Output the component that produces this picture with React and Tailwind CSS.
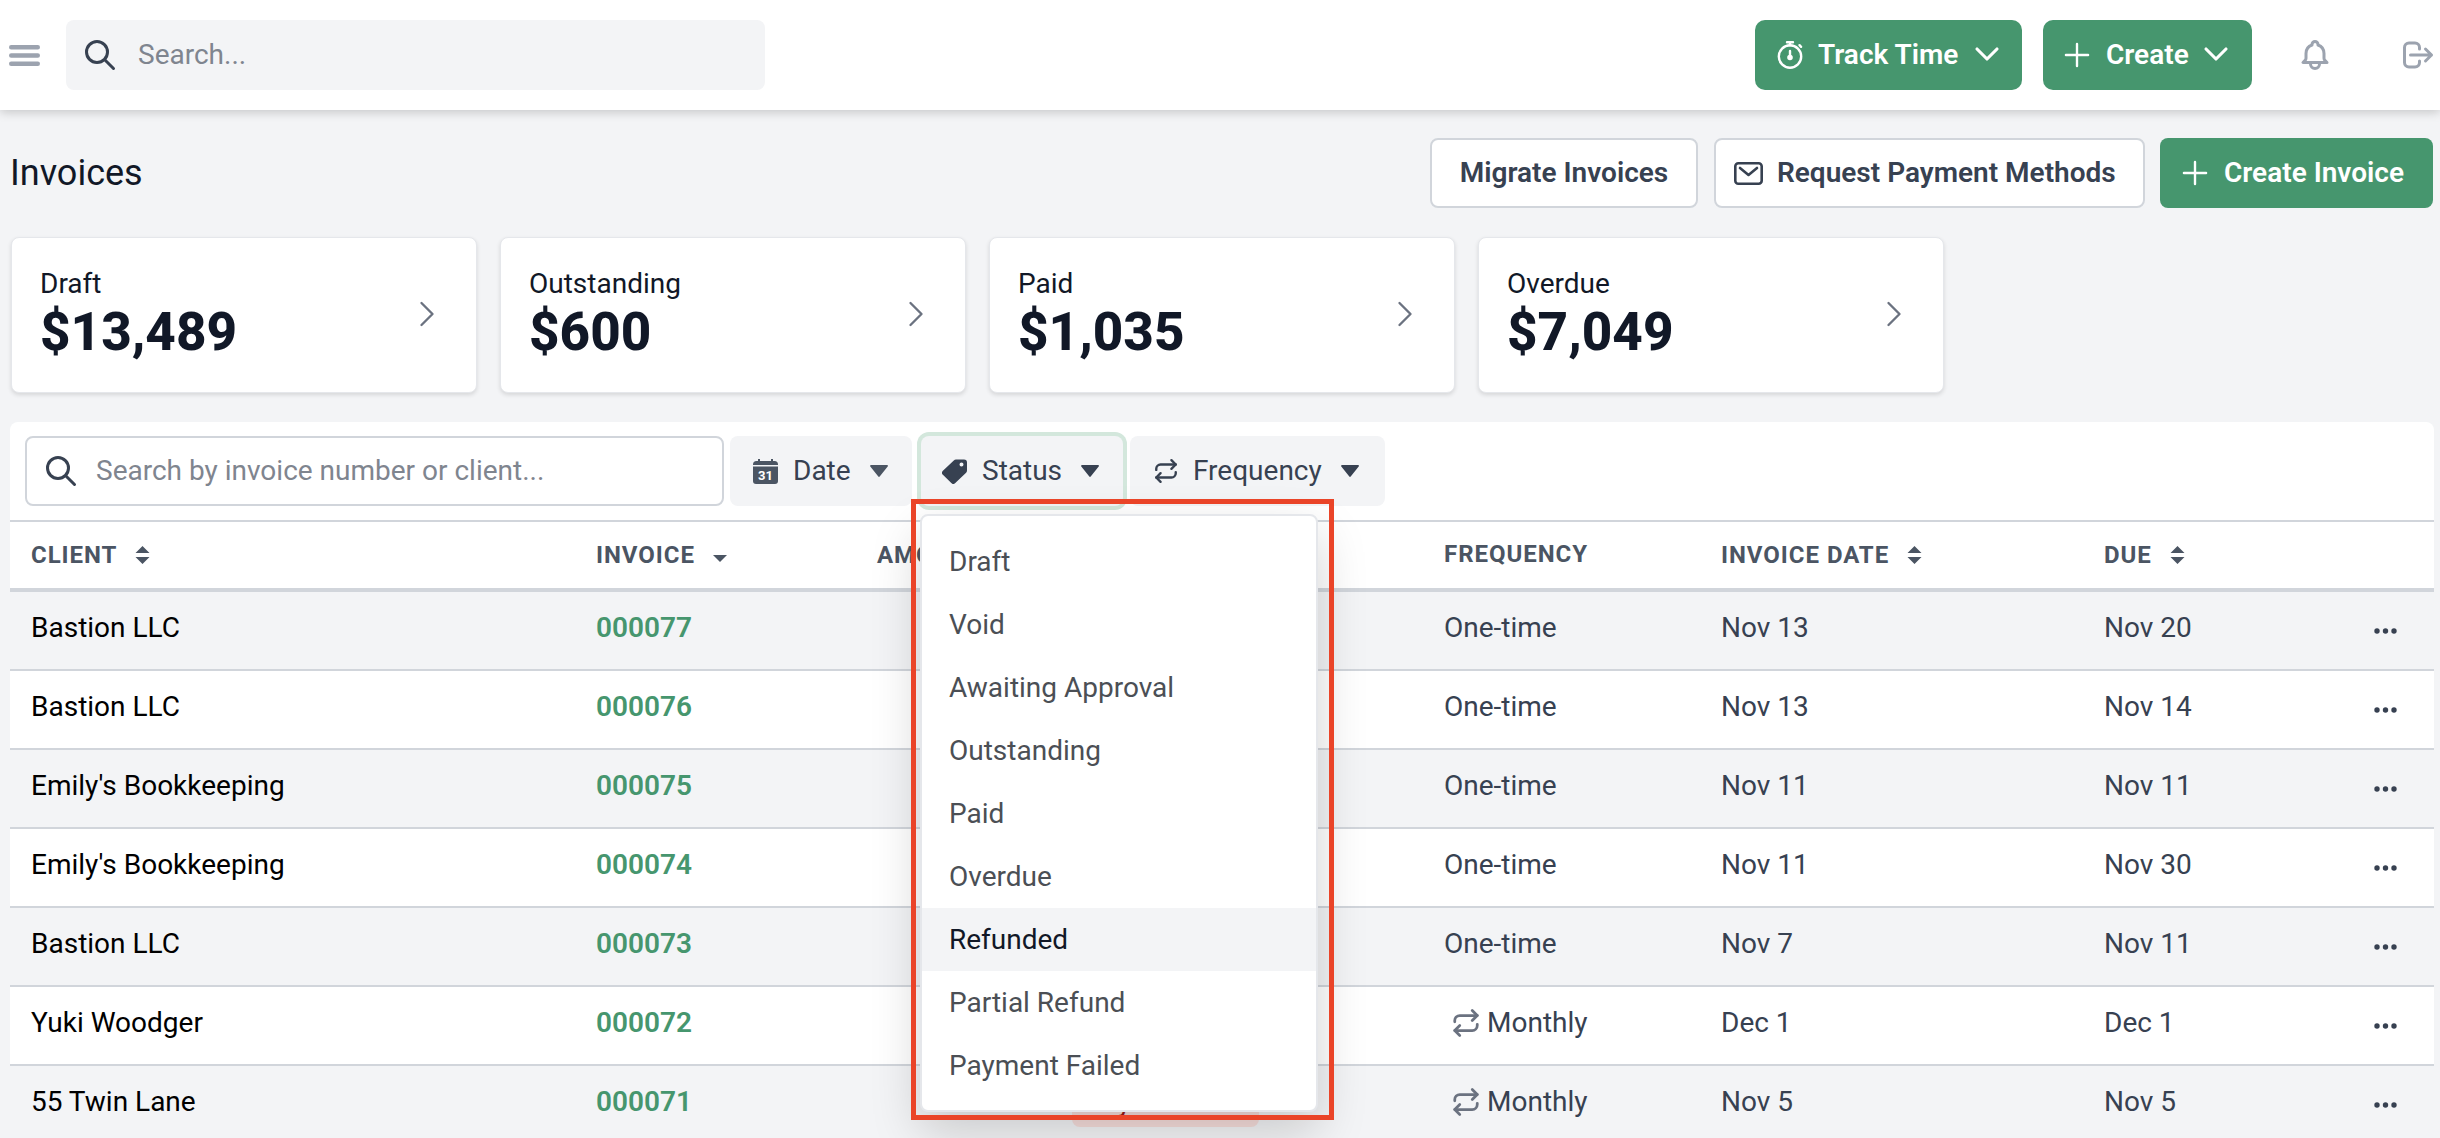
import { ChevronDown, ChevronRight, Plus, Repeat } from "lucide-react";

const invoices = [
  { client: "Bastion LLC", number: "000077", frequency: "One-time", date: "Nov 13", due: "Nov 20" },
  { client: "Bastion LLC", number: "000076", frequency: "One-time", date: "Nov 13", due: "Nov 14" },
  { client: "Emily's Bookkeeping", number: "000075", frequency: "One-time", date: "Nov 11", due: "Nov 11" },
  { client: "Emily's Bookkeeping", number: "000074", frequency: "One-time", date: "Nov 11", due: "Nov 30" },
  { client: "Bastion LLC", number: "000073", frequency: "One-time", date: "Nov 7", due: "Nov 11" },
  { client: "Yuki Woodger", number: "000072", frequency: "Monthly", date: "Dec 1", due: "Dec 1" },
  { client: "55 Twin Lane", number: "000071", frequency: "Monthly", date: "Nov 5", due: "Nov 5", status: "Payment Failed" },
];

const stats = [
  { label: "Draft", value: "$13,489" },
  { label: "Outstanding", value: "$600" },
  { label: "Paid", value: "$1,035" },
  { label: "Overdue", value: "$7,049" },
];

const statuses = ["Draft", "Void", "Awaiting Approval", "Outstanding", "Paid", "Overdue", "Refunded", "Partial Refund", "Payment Failed"];

const columns = "grid grid-cols-[565px_281px_195px_372px_277px_383px_1fr_60px] items-center pl-[21px]";

function SearchIcon({ className }) {
  return (
    <svg viewBox="0 0 24 24" fill="none" stroke="currentColor" strokeWidth="2" strokeLinecap="round" strokeLinejoin="round" className={className}>
      <path d="M21 21l-6-6m2-5a7 7 0 11-14 0 7 7 0 0114 0z" />
    </svg>
  );
}

function Caret({ className = "text-[#374151]" }) {
  return (
    <svg viewBox="0 0 18 12" fill="currentColor" className={`w-[18px] h-[12px] shrink-0 ${className}`}>
      <path d="M1 0h16c.8 0 1.2.9.7 1.5L9.7 11.5c-.4.5-1 .5-1.4 0L.3 1.5C-.2.9.2 0 1 0z" />
    </svg>
  );
}

function SortIcon() {
  return (
    <svg viewBox="0 0 14 18" fill="#4b5563" className="w-[15px] h-[18px] ml-[18px] shrink-0">
      <path d="M7 0l7 7H0zM0 11h14l-7 7z" />
    </svg>
  );
}

function Stat({ label, value }) {
  return (
    <div className="w-[466px] h-[156px] bg-white rounded-lg border border-[#e5e7eb] shadow-[0_2px_4px_rgba(0,0,0,0.12)] flex items-center justify-between pl-[28px] pr-[27px]">
      <div>
        <div className="text-[28px] leading-[34px] text-[#111827]">{label}</div>
        <div className="text-[53px] leading-[62px] font-extrabold text-[#111827]">{value}</div>
      </div>
      <ChevronRight className="w-[44px] h-[44px] text-[#6b7280] -mt-[2px]" strokeWidth={1.3} />
    </div>
  );
}

function FilterButton({ icon, label, caret, className }) {
  return (
    <button className={`h-[70px] bg-[#f3f4f6] rounded-lg flex items-center text-[28px] text-[#374151] shrink-0 ${className}`}>
      {icon}
      <span>{label}</span>
      {caret}
    </button>
  );
}

export default function App() {
  return (
    <div className="w-[2440px] h-[1138px] overflow-hidden bg-[#f3f4f6] font-['Roboto',sans-serif]">
      <header className="relative z-10 h-[110px] bg-white shadow-[0_2px_10px_rgba(0,0,0,0.2)] flex items-center justify-between pl-[9px] pr-[4px]">
        <div className="flex items-center">
          <svg viewBox="0 0 31 21" fill="none" stroke="#9ca3af" strokeWidth="4.4" strokeLinecap="round" className="w-[31px] h-[21px]">
            <path d="M2.2 2.2h26.6M2.2 10.5h26.6M2.2 18.8h26.6" />
          </svg>
          <div className="ml-[26px] w-[699px] h-[70px] bg-[#f3f4f6] rounded-lg flex items-center pl-[16px]">
            <SearchIcon className="w-[36px] h-[36px] text-[#374151] shrink-0" />
            <input placeholder="Search..." className="ml-[20px] w-full bg-transparent outline-none text-[28px] text-[#374151] placeholder:text-[#7f858f]" />
          </div>
        </div>
        <div className="flex items-center">
          <button className="w-[267px] h-[70px] bg-[#46966e] rounded-[10px] flex items-center pl-[22px] text-white text-[28px] font-semibold">
            <svg viewBox="0 0 26 28" fill="none" stroke="currentColor" strokeWidth="2.4" strokeLinecap="round" className="w-[26px] h-[28px] shrink-0">
              <circle cx="13" cy="15.5" r="11.2" />
              <path d="M13 1.2v3M10 1.2h6M22.5 4.2l1.6 1.6" />
              <path d="M13 10v5" />
              <circle cx="13" cy="16.5" r="1.6" fill="currentColor" />
            </svg>
            <span className="ml-[15px]">Track Time</span>
            <ChevronDown className="w-[40px] h-[40px] ml-[9px] -mt-[3px] shrink-0" strokeWidth={1.9} />
          </button>
          <button className="ml-[21px] w-[209px] h-[70px] bg-[#46966e] rounded-[10px] flex items-center pl-[15px] text-white text-[28px] font-semibold">
            <Plus className="w-[38px] h-[38px] shrink-0" strokeWidth={1.5} />
            <span className="ml-[10px]">Create</span>
            <ChevronDown className="w-[40px] h-[40px] ml-[7px] -mt-[3px] shrink-0" strokeWidth={1.9} />
          </button>
          <svg viewBox="0 0 24 24" fill="none" stroke="#9ca3af" strokeWidth="2" strokeLinecap="round" strokeLinejoin="round" className="ml-[45px] w-[36px] h-[36px]">
            <path d="M15 17h5l-1.405-1.405A2.032 2.032 0 0118 14.158V11a6.002 6.002 0 00-4-5.659V5a2 2 0 10-4 0v.341C7.67 6.165 6 8.388 6 11v3.159c0 .538-.214 1.055-.595 1.436L4 17h5m6 0v1a3 3 0 11-6 0v-1m6 0H9" />
          </svg>
          <svg viewBox="0 0 24 24" fill="none" stroke="#9ca3af" strokeWidth="2" strokeLinecap="round" strokeLinejoin="round" className="ml-[67px] w-[36px] h-[36px]">
            <path d="M17 16l4-4m0 0l-4-4m4 4H7m6 4v1a3 3 0 01-3 3H6a3 3 0 01-3-3V7a3 3 0 013-3h4a3 3 0 013 3v1" />
          </svg>
        </div>
      </header>

      <main className="pl-[10px] pr-[6px] pt-[28px]">
        <div className="flex items-center justify-between pr-[1px]">
          <h1 className="text-[36px] text-[#111827]">Invoices</h1>
          <div className="flex items-center text-[28px] font-semibold">
            <button className="w-[268px] h-[70px] bg-white border-2 border-[#d1d5db] rounded-lg text-[#374151]">Migrate Invoices</button>
            <button className="ml-[16px] w-[431px] h-[70px] bg-white border-2 border-[#d1d5db] rounded-lg text-[#374151] flex items-center pl-[18px]">
              <svg viewBox="0 0 29 23" fill="none" stroke="currentColor" strokeWidth="2.6" strokeLinecap="round" strokeLinejoin="round" className="w-[29px] h-[23px] shrink-0">
                <rect x="1.3" y="1.3" width="26.4" height="20.4" rx="3" />
                <path d="M6 6l8.5 7L23 6" />
              </svg>
              <span className="ml-[14px]">Request Payment Methods</span>
            </button>
            <button className="ml-[15px] w-[273px] h-[70px] bg-[#46966e] rounded-lg text-white flex items-center pl-[16px]">
              <Plus className="w-[38px] h-[38px] shrink-0" strokeWidth={1.5} />
              <span className="ml-[10px]">Create Invoice</span>
            </button>
          </div>
        </div>

        <div className="mt-[29px] pl-[1px] flex gap-[23px]">
          {stats.map((s) => (
            <Stat key={s.label} {...s} />
          ))}
        </div>

        <section className="relative mt-[29px] bg-white rounded-lg">
          <div className="h-[100px] border-b-2 border-[#d1d5db] pl-[15px] pt-[14px] flex items-start">
            <div className="w-[699px] h-[70px] bg-white border-2 border-[#d1d5db] rounded-lg flex items-center pl-[16px] shrink-0">
              <SearchIcon className="w-[36px] h-[36px] text-[#374151] shrink-0" />
              <input placeholder="Search by invoice number or client..." className="ml-[17px] w-full bg-transparent outline-none text-[28px] text-[#374151] placeholder:text-[#7f858f]" />
            </div>
            <FilterButton
              className="ml-[6px] w-[182px] pl-[23px]"
              label="Date"
              icon={
                <svg viewBox="0 0 25 25" className="w-[25px] h-[25px] mr-[15px] shrink-0">
                  <path d="M5 0h2v2h11V0h2v2h1.500A3.500 3.500 0 0 1 25 5.500V6H0v-.5A3.500 3.500 0 0 1 3.500 2H5z" fill="#4b5563" />
                  <path d="M0 7.500h25V22a3 3 0 0 1-3 3H3a3 3 0 0 1-3-3z" fill="#4b5563" />
                  <text x="12.500" y="21" textAnchor="middle" fontSize="13" fontWeight="700" fill="#ffffff">31</text>
                </svg>
              }
              caret={<span className="ml-[19px]"><Caret className="text-[#4b5563]" /></span>}
            />
            <FilterButton
              className="ml-[9px] w-[202px] pl-[21px] ring-4 ring-[#d3e7dc]"
              label="Status"
              icon={
                <svg viewBox="0 0 25 25" className="w-[25px] h-[25px] mr-[15px] shrink-0">
                  <path fillRule="evenodd" fill="#374151" d="M14 .6h8a3 3 0 0 1 3 3v8c0 .9-.3 1.600-.9 2.200L13.300 24.100a2.800 2.800 0 0 1-4 0L.9 15.700a2.800 2.800 0 0 1 0-4L11.800 1.500C12.400.9 13.100.6 14 .6zM19.500 3.600a2 2 0 1 0 0 4 2 2 0 0 0 0-4z" />
                </svg>
              }
              caret={<span className="ml-[19px]"><Caret /></span>}
            />
            <FilterButton
              className="ml-[7px] w-[255px] pl-[23px]"
              label="Frequency"
              icon={<Repeat className="w-[26px] h-[26px] mr-[14px] text-[#374151] shrink-0" strokeWidth={2.2} />}
              caret={<span className="ml-[19px]"><Caret /></span>}
            />
          </div>

          <div className={`${columns} h-[70px] border-b-4 border-[#d1d5db] text-[24px] font-bold tracking-[0.04em] text-[#4b5563]`}>
            <div className="flex items-center">CLIENT<SortIcon /></div>
            <div className="flex items-center">
              INVOICE
              <svg viewBox="0 0 14 7" fill="#4b5563" className="w-[14px] h-[7px] ml-[18px] mt-[7px]"><path d="M0 0h14l-7 7z" /></svg>
            </div>
            <div>AMOUNT</div>
            <div>STATUS</div>
            <div className="-mt-[3px]">FREQUENCY</div>
            <div className="flex items-center">INVOICE DATE<SortIcon /></div>
            <div className="flex items-center">DUE<SortIcon /></div>
            <div />
          </div>

          {invoices.map((row, i) => (
            <div key={row.number} className={`${columns} h-[79px] border-b-2 border-[#d1d5db] text-[28px] ${i % 2 === 0 ? "bg-[#f3f4f6]" : "bg-white"}`}>
              <div className="text-black -mt-[5px]">{row.client}</div>
              <div className="font-semibold text-[#46966e] -mt-[5px]">{row.number}</div>
              <div />
              <div>
                {row.status && (
                  <span className="inline-flex items-center h-[40px] w-[187px] pl-[18px] pb-[7px] rounded-lg bg-[#f6dedb] text-[#991b1b] text-[24px] font-medium whitespace-nowrap">{row.status}</span>
                )}
              </div>
              <div className="text-[#374151] -mt-[5px]">
                {row.frequency === "Monthly" ? (
                  <span className="flex items-center">
                    <Repeat className="w-[30px] h-[30px] ml-[7px] mr-[6px] text-[#6b7280]" strokeWidth={2.2} />
                    {row.frequency}
                  </span>
                ) : (
                  row.frequency
                )}
              </div>
              <div className="text-[#374151] -mt-[5px]">{row.date}</div>
              <div className="text-[#374151] -mt-[5px]">{row.due}</div>
              <svg viewBox="0 0 23 6" fill="#374151" className="w-[23px] h-[6px] mt-[1px]">
                <circle cx="3" cy="3" r="2.700" />
                <circle cx="11.500" cy="3" r="2.700" />
                <circle cx="20" cy="3" r="2.700" />
              </svg>
            </div>
          ))}

          <div className="absolute left-[910px] top-[92px] w-[398px] h-[598px] bg-white border-2 border-[#e5e7eb] rounded-lg overflow-hidden pt-[14px] shadow-[0_20px_50px_rgba(0,0,0,0.18)]">
            {statuses.map((s) => (
              <div key={s} className={`h-[63px] pl-[27px] flex items-center text-[28px] ${s === "Refunded" ? "bg-[#f3f4f6] text-[#111827]" : "text-[#4b4f55]"}`}>
                {s}
              </div>
            ))}
          </div>

          <div className="absolute left-[901px] top-[77px] w-[423px] h-[621px] border-[5px] border-[#ea4428] pointer-events-none" />
        </section>
      </main>
    </div>
  );
}
